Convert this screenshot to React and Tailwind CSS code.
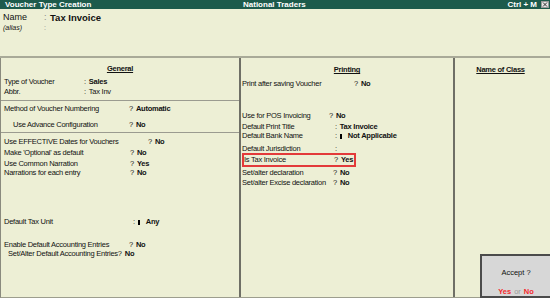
import React from 'react';

// one line of a settings column: label | separator value
const Row = ({ label, w, sep = '?', value, bold = true, pl = 0, h = 'h-[10px]', mt = '' }) => (
  <div className={`flex items-center ${h} ${mt} leading-none whitespace-nowrap`} style={{ paddingLeft: pl }}>
    <span className="shrink-0 overflow-visible" style={w ? { width: w } : undefined}>{label}</span>
    <span>{sep}</span>
    {value && <span className={`ml-[3px] ${bold ? 'font-bold' : ''}`}>{value}</span>}
  </div>
);

const Mark = () => <span className="inline-block w-[2px] h-[5px] bg-black mr-[6px] align-middle" />;

const App = () => {
  return (
    <div className="w-[550px] h-[298px] overflow-hidden bg-[#edefd5] flex flex-col font-['Liberation_Sans',Arial,sans-serif] text-[#111] text-[7.5px] tracking-[-0.25px]">
      {/* title bar */}
      <div className="h-[9px] bg-[#1d5b4c] flex items-center text-white font-bold text-[8px] leading-none tracking-normal">
        <div className="w-[200px] pl-[5px]">Voucher Type Creation</div>
        <div className="flex-1 pl-[43px]">National Traders</div>
        <div className="pr-[4px]">Ctrl + M</div>
        <svg width="8" height="7" viewBox="0 0 8 7" className="mr-[1px]">
          <rect x="0.5" y="0.5" width="7" height="6" fill="#e6e6e6" stroke="#9a9a9a" />
          <path d="M2 1.5 L6 5.5 M6 1.5 L2 5.5" stroke="#333" strokeWidth="1" />
        </svg>
      </div>

      {/* name block */}
      <div className="h-[47px] pl-[3px] pt-[3px] tracking-normal">
        <div className="flex items-center h-[11px] leading-none text-[9px]">
          <span className="w-[41px]">Name</span>
          <span className="w-[6px] text-[#888]">:</span>
          <span className="font-bold text-[9.5px]">Tax Invoice</span>
        </div>
        <div className="flex items-center h-[9px] leading-none text-[7px] italic">
          <span className="w-[41px]">(alias)</span>
          <span className="not-italic text-[#888]">:</span>
        </div>
      </div>
      <div className="h-[2px] bg-[#a9aa98]" />

      {/* body */}
      <div className="flex flex-1 border-b border-[#9d9e8e] border-l border-l-[#8a8a7e]">
        {/* General */}
        <div className="w-[240px] border-r-2 border-[#6f6f66] flex flex-col">
          <div className="mt-[6px] h-[10px] flex items-center justify-center leading-none font-bold underline">General</div>
          <div className="pl-[3px]">
            <Row mt="mt-[3px]" label="Type of Voucher" w={80} sep=":" value="Sales" />
            <Row label="Abbr." w={80} sep=":" value="Tax Inv" bold={false} />
          </div>
          <div className="mt-[3px] h-px bg-[#9b9b90]" />
          <div className="pl-[3px]">
            <Row mt="mt-[3px]" label="Method of Voucher Numbering" w={125} value="Automatic" />
            <Row mt="mt-[6px]" label="Use Advance Configuration" w={116} pl={9} value="No" />
          </div>
          <div className="mt-[2px] h-px bg-[#9b9b90]" />
          <div className="pl-[3px]">
            <Row mt="mt-[4px]" label="Use EFFECTIVE Dates for Vouchers" w={144} value="No" />
            <Row mt="mt-px" label="Make 'Optional' as default" w={126} value="No" />
            <Row mt="mt-px" h="h-[9px]" label="Use Common Narration" w={126} value="Yes" />
            <Row h="h-[9px]" label="Narrations for each entry" w={126} value="No" />
            <div className="mt-[40px] flex items-center h-[10px] leading-none">
              <span className="w-[129px]">Default Tax Unit</span>
              <span className="mr-[3px]">:</span>
              <Mark />
              <span className="font-bold">Any</span>
            </div>
            <Row mt="mt-[13px]" h="h-[9px]" label="Enable Default Accounting Entries" w={125} value="No" />
            <Row h="h-[9px]" label="Set/Alter Default Accounting Entries" pl={4} value="No" />
          </div>
        </div>

        {/* Printing */}
        <div className="w-[214px] border-r-2 border-[#6f6f66] flex flex-col">
          <div className="mt-[7px] h-[10px] flex items-center justify-center leading-none font-bold underline">Printing</div>
          <div className="pl-[1px]">
            <Row mt="mt-[4px]" label="Print after saving Voucher" w={112} value="No" />
            <Row mt="mt-[22px]" label="Use for POS Invoicing" w={87} value="No" />
            <Row mt="mt-px" h="h-[9px]" label="Default Print Title" w={93} sep=":" value="Tax Invoice" />
            <div className="flex items-center h-[10px] leading-none">
              <span className="w-[93px]">Default Bank Name</span>
              <span className="mr-[3px]">:</span>
              <Mark />
              <span className="font-bold">Not Applicable</span>
            </div>
            <Row mt="mt-[3px]" h="h-[9px]" label="Default Jurisdiction" w={93} sep=":" />
            <div className="w-[114px] h-[14px] border-2 border-[#e33a3a] flex items-center leading-none">
              <span className="w-[90px]">Is Tax Invoice</span>
              <span>?</span>
              <span className="ml-[3px] font-bold">Yes</span>
            </div>
            <Row mt="mt-px" label="Set/alter declaration" w={91} value="No" />
            <Row label="Set/alter Excise declaration" w={91} value="No" />
          </div>
        </div>

        {/* Class */}
        <div className="flex-1 flex flex-col">
          <div className="mt-[7px] h-[10px] flex items-center justify-center leading-none font-bold underline pr-[4px]">Name of Class</div>
          <div className="mt-auto self-end w-[70px] h-[44px] -mb-px bg-[#d7d7d7] border-2 border-[#4b4b4b] border-r-0 flex flex-col items-center leading-none tracking-normal">
            <div className="mt-[13px] text-[7.5px]">Accept ?</div>
            <div className="mt-[11px] text-[7.5px]">
              <span className="font-bold text-[#f4282b]">Yes</span>
              <span className="text-[#9a9a9a] mx-[3px]">or</span>
              <span className="font-bold text-[#f4282b]">No</span>
            </div>
          </div>
        </div>
      </div>
    </div>
  );
};

export default App;
